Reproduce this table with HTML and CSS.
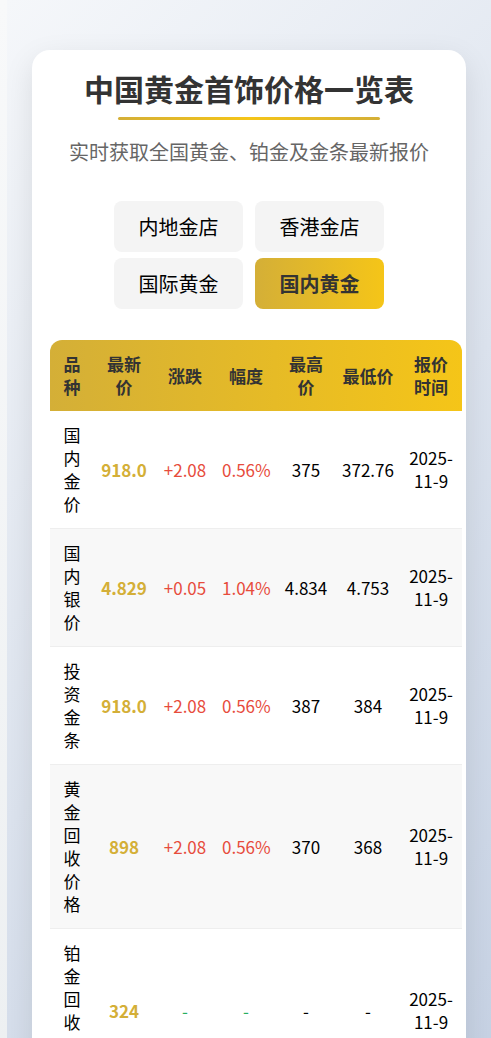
FILE: index.html
```html
<!DOCTYPE html>
<html lang="zh-CN">
<head>
<meta charset="utf-8">
<title>中国黄金首饰价格一览表</title>
<link rel="stylesheet" href="styles.css">
</head>
<body>
<div class="page">
  <div class="card">
    <h1 class="title">中国黄金首饰价格一览表</h1>
    <div class="title-line"></div>
    <p class="subtitle">实时获取全国黄金、铂金及金条最新报价</p>
    <div class="tabs">
      <button class="tab">内地金店</button>
      <button class="tab">香港金店</button>
      <button class="tab">国际黄金</button>
      <button class="tab active">国内黄金</button>
    </div>
    <table class="prices">
      <colgroup>
        <col class="c1"><col class="c2"><col class="c3"><col class="c4"><col class="c5"><col class="c6"><col class="c7">
      </colgroup>
      <thead>
        <tr><th>品种</th><th>最新价</th><th>涨跌</th><th>幅度</th><th>最高价</th><th>最低价</th><th>报价时间</th></tr>
      </thead>
      <tbody>
        <tr><td>国内金价</td><td class="price">918.0</td><td class="up">+2.08</td><td class="up">0.56%</td><td class="num">375</td><td class="num">372.76</td><td>2025-11-9</td></tr>
        <tr><td>国内银价</td><td class="price">4.829</td><td class="up">+0.05</td><td class="up">1.04%</td><td class="num">4.834</td><td class="num">4.753</td><td>2025-11-9</td></tr>
        <tr><td>投资金条</td><td class="price">918.0</td><td class="up">+2.08</td><td class="up">0.56%</td><td class="num">387</td><td class="num">384</td><td>2025-11-9</td></tr>
        <tr><td>黄金回收价格</td><td class="price">898</td><td class="up">+2.08</td><td class="up">0.56%</td><td class="num">370</td><td class="num">368</td><td>2025-11-9</td></tr>
        <tr><td>铂金回收价格</td><td class="price">324</td><td class="flat">-</td><td class="flat">-</td><td class="num">-</td><td class="num">-</td><td>2025-11-9</td></tr>
      </tbody>
    </table>
  </div>
</div>
</body>
</html>
```
FILE: styles.css
```css
html {
  background: linear-gradient(180deg, #f8f9fa 0%, #eceff1 100%);
  min-height: 100%;
}
body {
  margin: 0 0 0 7px;
  min-height: 100vh;
  background: linear-gradient(135deg, #f5f7fa 0%, #c3cfe2 100%);
  font-family: "Noto Sans CJK SC", "Noto Sans", sans-serif;
  color: #000;
}
.page {
  padding: 50px 25px 40px;
}
.card {
  background: #fff;
  border-radius: 18px;
  box-shadow: 0 10px 30px rgba(0, 0, 0, 0.1);
  padding: 20px 18px 30px;
  display: flex;
  flex-direction: column;
  align-items: flex-start;
}
.title {
  align-self: stretch;
  margin: 0;
  text-align: center;
  font-size: 30px;
  line-height: 36px;
  font-weight: 700;
  color: #333;
}
.title-line {
  align-self: center;
  width: 262px;
  height: 3px;
  margin-top: 11px;
  background: linear-gradient(90deg, #d4af37 0%, #f5c518 50%, #d4af37 100%);
  border-radius: 2px;
}
.subtitle {
  align-self: stretch;
  margin: 17px 0 0;
  text-align: center;
  font-size: 20px;
  line-height: 30px;
  color: #666;
}
.tabs {
  align-self: center;
  margin-top: 34px;
  display: grid;
  grid-template-columns: 129px 129px;
  column-gap: 12px;
  row-gap: 6px;
}
.tab {
  height: 51px;
  border: none;
  border-radius: 8px;
  background: #f4f4f4;
  font-family: inherit;
  font-size: 20px;
  color: #000;
  padding: 0;
}
.tab.active {
  background: linear-gradient(90deg, #d4af37 0%, #f5c518 100%);
  color: #333;
  font-weight: 700;
}
.prices {
  margin-top: 31px;
  width: 412px;
  flex: none;
  table-layout: fixed;
  border-collapse: separate;
  border-spacing: 0;
  border-radius: 12px 12px 0 0;
  overflow: hidden;
  font-size: 17px;
  line-height: 23px;
}
.c1 { width: 44px; }
.c2 { width: 60px; }
.c3 { width: 62px; }
.c4 { width: 60px; }
.c5 { width: 60px; }
.c6 { width: 64px; }
.c7 { width: 62px; }
.prices thead tr {
  background: linear-gradient(90deg, #d4af37 0%, #f5c518 100%);
}
.prices th {
  padding: 12px 6px 13px;
  font-weight: 700;
  color: #333;
  text-align: center;
  vertical-align: middle;
}
.prices td {
  padding: 12px 6px 13px;
  text-align: center;
  vertical-align: middle;
  border-bottom: 1px solid #eee;
}
.prices tbody tr:nth-child(even) {
  background: #f8f8f8;
}
.prices .price {
  color: #d4af37;
  font-weight: 700;
  white-space: nowrap;
}
.prices .up {
  color: #e74c3c;
  white-space: nowrap;
}
.prices .flat {
  color: #27ae60;
}
.prices .num {
  white-space: nowrap;
}
```
